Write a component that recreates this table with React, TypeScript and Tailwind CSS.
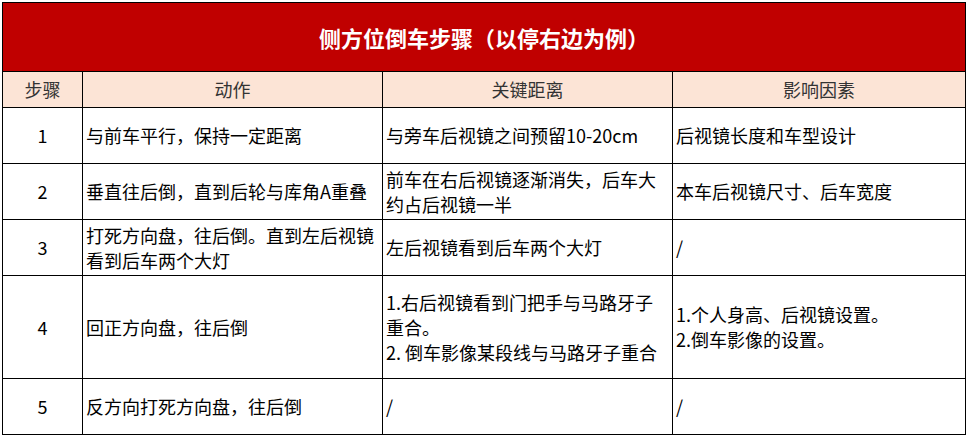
import type React from 'react';

type Row = {
    step: string;
    action: string[];
    distance: string[];
    factor: string[];
    h: string;
};

const rows: Row[] = [
    {
        step: '1',
        action: ['与前车平行，保持一定距离'],
        distance: ['与旁车后视镜之间预留10-20cm'],
        factor: ['后视镜长度和车型设计'],
        h: 'h-[56px]',
    },
    {
        step: '2',
        action: ['垂直往后倒，直到后轮与库角A重叠'],
        distance: ['前车在右后视镜逐渐消失，后车大', '约占后视镜一半'],
        factor: ['本车后视镜尺寸、后车宽度'],
        h: 'h-[56px]',
    },
    {
        step: '3',
        action: ['打死方向盘，往后倒。直到左后视镜', '看到后车两个大灯'],
        distance: ['左后视镜看到后车两个大灯'],
        factor: ['/'],
        h: 'h-[56px]',
    },
    {
        step: '4',
        action: ['回正方向盘，往后倒'],
        distance: ['1.右后视镜看到门把手与马路牙子', '重合。', '2. 倒车影像某段线与马路牙子重合'],
        factor: ['1.个人身高、后视镜设置。', '2.倒车影像的设置。'],
        h: 'h-[103px]',
    },
    {
        step: '5',
        action: ['反方向打死方向盘，往后倒'],
        distance: ['/'],
        factor: ['/'],
        h: 'h-[56px]',
    },
];

function Lines({ lines }: { lines: string[] }): React.ReactElement {
    return (
        <div className="flex flex-col">
            {lines.map((l, i) => (
                <span key={i} className="whitespace-nowrap leading-[25px]">
                    {l}
                </span>
            ))}
        </div>
    );
}

export default function App(): React.ReactElement {
    return (
        <div
            className="w-[969px] h-[437px] bg-white pt-[2px] pl-[2px] overflow-hidden"
            style={{ fontFamily: '"Noto Sans CJK SC", "Microsoft YaHei", sans-serif' }}
        >
            <table className="table-fixed border-collapse w-[963px] text-[18px] text-black">
                <colgroup>
                    <col className="w-[80px]" />
                    <col className="w-[300px]" />
                    <col className="w-[290px]" />
                    <col className="w-[293px]" />
                </colgroup>
                <tbody>
                    {/* Title */}
                    <tr className="h-[69px]">
                        <td
                            colSpan={4}
                            className="border border-black bg-[#c00000] text-center text-white font-bold text-[22px] p-0"
                        >
                            侧方位倒车步骤（以停右边为例）
                        </td>
                    </tr>
                    {/* Header */}
                    <tr className="h-[36px] bg-[#fce4d6] text-[#333333]">
                        <td className="border border-black text-center p-0">步骤</td>
                        <td className="border border-black text-center p-0">动作</td>
                        <td className="border border-black text-center p-0">关键距离</td>
                        <td className="border border-black text-center p-0">影响因素</td>
                    </tr>
                    {rows.map((r) => (
                        <tr key={r.step} className={r.h}>
                            <td className="border border-black text-center p-0 align-middle">{r.step}</td>
                            <td className="border border-black px-[3px] py-0 align-middle">
                                <Lines lines={r.action} />
                            </td>
                            <td className="border border-black px-[3px] py-0 align-middle">
                                <Lines lines={r.distance} />
                            </td>
                            <td className="border border-black px-[3px] py-0 align-middle">
                                <Lines lines={r.factor} />
                            </td>
                        </tr>
                    ))}
                </tbody>
            </table>
        </div>
    );
}
